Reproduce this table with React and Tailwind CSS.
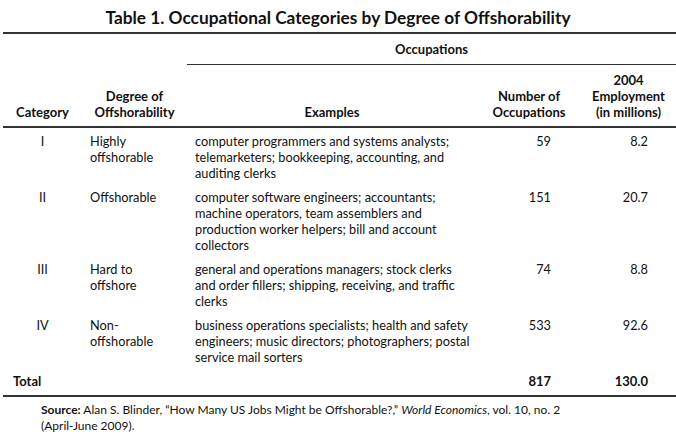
import React from "react";

const rows = [
    {
        cat: "I",
        degree: ["Highly", "offshorable"],
        examples: ["computer programmers and systems analysts;", "telemarketers; bookkeeping, accounting, and", "auditing clerks"],
        count: "59",
        jobs: "8.2",
    },
    {
        cat: "II",
        degree: ["Offshorable"],
        examples: ["computer software engineers; accountants;", "machine operators, team assemblers and", "production worker helpers; bill and account", "collectors"],
        count: "151",
        jobs: "20.7",
    },
    {
        cat: "III",
        degree: ["Hard to", "offshore"],
        examples: ["general and operations managers; stock clerks", "and order fillers; shipping, receiving, and traffic", "clerks"],
        count: "74",
        jobs: "8.8",
    },
    {
        cat: "IV",
        degree: ["Non-", "offshorable"],
        examples: ["business operations specialists; health and safety", "engineers; music directors; photographers; postal", "service mail sorters"],
        count: "533",
        jobs: "92.6",
    },
];

function Lines({items}) {
    return items.map((t, i) => <div key={i}>{t}</div>);
}

export default function App() {
    return (
        <div className="w-[676px] h-[434px] overflow-hidden bg-white text-[#111] font-['Lato','Open_Sans',sans-serif]">
            <h1 className="pt-[8px] h-[32px] text-center text-[17.3px] leading-[20px] font-bold">
                Table 1. Occupational Categories by Degree of Offshorability
            </h1>
            <table className="ml-[3px] w-[673px] border-collapse table-fixed text-[12.75px]">
                <colgroup>
                    <col className="w-[79px]"/>
                    <col className="w-[105px]"/>
                    <col className="w-[290px]"/>
                    <col className="w-[104px]"/>
                    <col/>
                </colgroup>
                <thead className="font-bold leading-[16px] text-[13px]">
                <tr className="border-t-2 border-[#333]">
                    <th colSpan={2}></th>
                    <th colSpan={3} className="h-[31px] pt-[1px] text-center border-b border-[#333]">Occupations</th>
                </tr>
                <tr className="border-b-2 border-[#333]">
                    <th className="h-[63px] align-bottom pb-[6px] text-center">Category</th>
                    <th className="align-bottom pb-[6px] text-center">Degree of<br/>Offshorability</th>
                    <th className="align-bottom pb-[6px] text-center">Examples</th>
                    <th className="align-bottom pb-[6px] text-center">Number of<br/>Occupations</th>
                    <th className="align-bottom pb-[6px] text-center">2004<br/>Employment<br/>(in millions)</th>
                </tr>
                </thead>
                <tbody className="leading-[16px]">
                {rows.map((r) => (
                    <tr key={r.cat} className="align-top">
                        <td className="pt-[5px] pb-[3px] text-center">{r.cat}</td>
                        <td className="pt-[5px] pb-[3px] pl-[8px]"><Lines items={r.degree}/></td>
                        <td className="pt-[5px] pb-[3px] pl-[8px] whitespace-nowrap"><Lines items={r.examples}/></td>
                        <td className="pt-[5px] pb-[3px] pr-[30px] text-right">{r.count}</td>
                        <td className="pt-[5px] pb-[3px] pr-[28px] text-right">{r.jobs}</td>
                    </tr>
                ))}
                <tr className="font-bold border-b-2 border-[#333] text-[13px]">
                    <td className="pt-[5px] pb-[6px] pl-[10px]">Total</td>
                    <td></td>
                    <td></td>
                    <td className="pt-[5px] pb-[6px] pr-[30px] text-right">817</td>
                    <td className="pt-[5px] pb-[6px] pr-[28px] text-right">130.0</td>
                </tr>
                </tbody>
            </table>
            <p className="mt-[5px] pl-[41px] text-[12px] leading-[16px]">
                <span className="font-bold">Source:</span> Alan S. Blinder, “How Many US Jobs Might be Offshorable?,” <i>World Economics</i>, vol. 10, no. 2
                <br/>
                (April-June 2009).
            </p>
        </div>
    );
}
